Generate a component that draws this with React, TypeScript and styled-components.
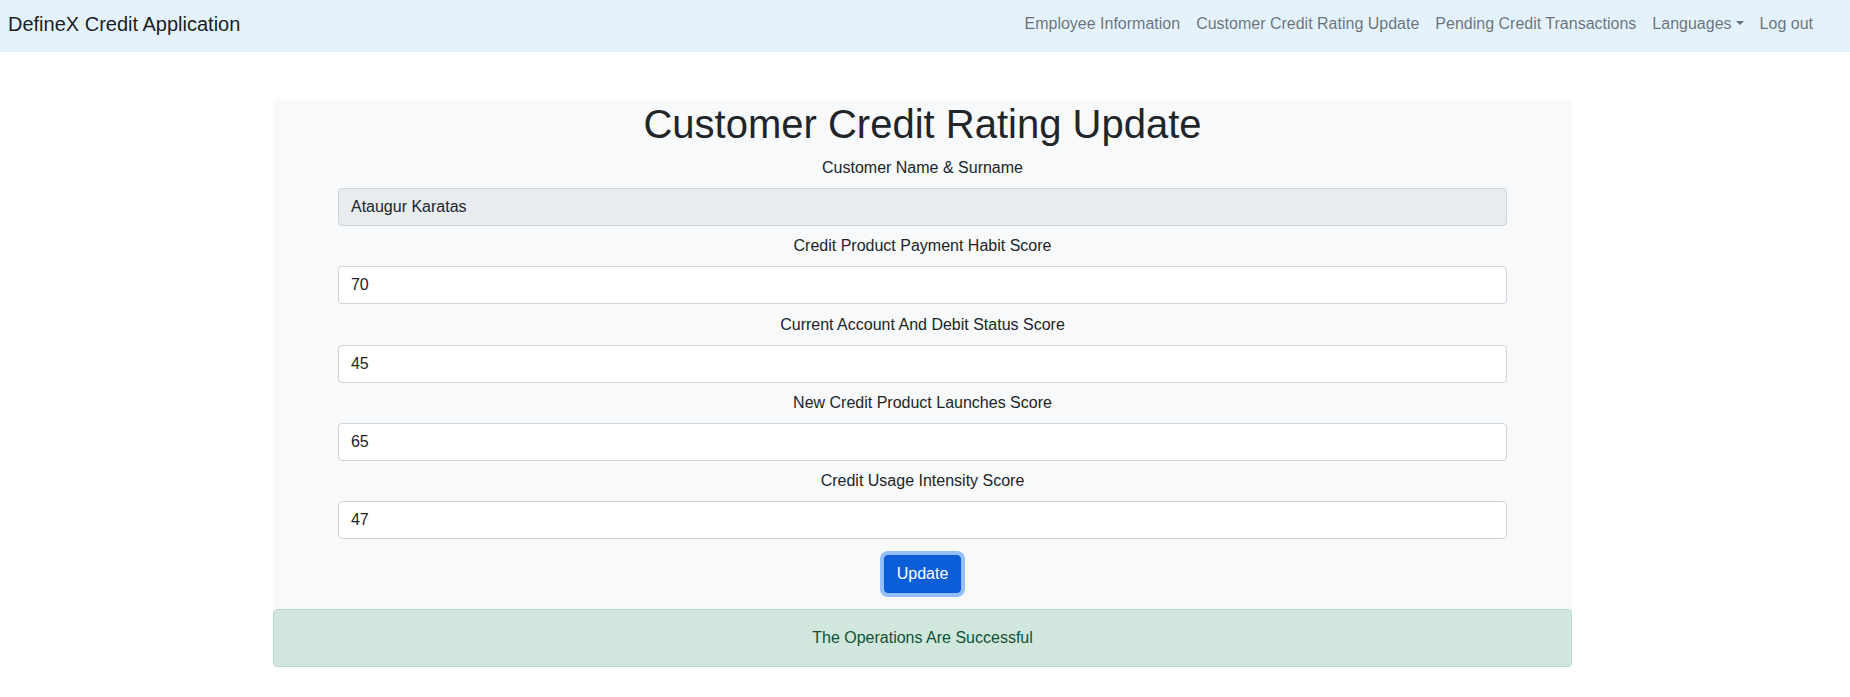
import React from "react";
import styled, { createGlobalStyle, css } from "styled-components";

const GlobalStyle = createGlobalStyle`
  *, *::before, *::after { box-sizing: border-box; }
  body {
    margin: 0;
    font-family: "Liberation Sans", Arial, sans-serif;
    font-size: 16px;
    line-height: 1.5;
    color: #212529;
    background: #ffffff;
  }
`;

const Navbar = styled.nav`
  display: flex;
  align-items: center;
  justify-content: space-between;
  height: 52px;
  padding: 0 29px 4px 8px;
  background: #e3f2fd;
`;

const Brand = styled.a`
  font-size: 20px;
  line-height: 30px;
  color: rgba(0, 0, 0, 0.9);
  text-decoration: none;
  white-space: nowrap;
`;

const NavList = styled.ul`
  display: flex;
  align-items: center;
  list-style: none;
  margin: 0;
  padding: 0;
`;

const NavLink = styled.a<{ $dropdown?: boolean }>`
  display: block;
  padding: 8px;
  font-size: 16px;
  line-height: 24px;
  color: rgba(0, 0, 0, 0.55);
  text-decoration: none;
  white-space: nowrap;
  cursor: pointer;
  ${(p) =>
    p.$dropdown &&
    css`
      &::after {
        content: "";
        display: inline-block;
        margin-left: 0.255em;
        vertical-align: 0.255em;
        border-top: 0.3em solid;
        border-right: 0.3em solid transparent;
        border-left: 0.3em solid transparent;
        border-bottom: 0;
      }
    `}
`;

const Main = styled.main`
  padding-top: 48px;
`;

const Card = styled.section`
  width: 1299px;
  margin-left: calc(50% - 652px);
  display: flex;
  flex-direction: column;
  align-items: center;
  padding-bottom: 16px;
  background: #f8f9fa;
  border-radius: 4px 4px 0 0;
`;

const Title = styled.h1`
  margin: 0 0 8px;
  font-size: 40px;
  font-weight: 500;
  line-height: 1.2;
  color: #212529;
  text-align: center;
`;

const FieldGroup = styled.div`
  width: 90%;
  display: flex;
  flex-direction: column;
  gap: 8px;
  & + & {
    margin-top: 8.25px;
  }
`;

const Label = styled.label`
  display: block;
  text-align: center;
  line-height: 24px;
  color: #212529;
`;

const Input = styled.input`
  display: block;
  width: 100%;
  height: 38px;
  padding: 6px 12px;
  font-family: inherit;
  font-size: 16px;
  line-height: 24px;
  color: #212529;
  background: #ffffff;
  border: 1px solid #ced4da;
  border-radius: 4px;
  outline: none;
  &:disabled {
    background: #e9ecef;
    opacity: 1;
    color: #212529;
  }
`;

const Button = styled.button`
  margin-top: 16px;
  padding: 6px 12px;
  font-family: inherit;
  font-size: 16px;
  line-height: 24px;
  color: #ffffff;
  background: #0b5ed7;
  border: 1px solid #0a58ca;
  border-radius: 4px;
  box-shadow: 0 0 0 4px rgba(49, 132, 253, 0.5);
  cursor: pointer;
`;

const Alert = styled.div`
  width: 1299px;
  margin-left: calc(50% - 652px);
  margin-bottom: 16px;
  padding: 16px;
  line-height: 24px;
  text-align: center;
  color: #0f5132;
  background: #d1e7dd;
  border: 1px solid #badbcc;
  border-radius: 4px;
`;

const links = [
  { label: "Employee Information" },
  { label: "Customer Credit Rating Update" },
  { label: "Pending Credit Transactions" },
  { label: "Languages", dropdown: true },
  { label: "Log out" },
];

const fields = [
  { label: "Customer Name & Surname", value: "Ataugur Karatas", disabled: true },
  { label: "Credit Product Payment Habit Score", value: "70" },
  { label: "Current Account And Debit Status Score", value: "45" },
  { label: "New Credit Product Launches Score", value: "65" },
  { label: "Credit Usage Intensity Score", value: "47" },
];

export default function App() {
  return (
    <>
      <GlobalStyle />
      <Navbar>
        <Brand>DefineX Credit Application</Brand>
        <NavList>
          {links.map((l) => (
            <li key={l.label}>
              <NavLink $dropdown={l.dropdown}>{l.label}</NavLink>
            </li>
          ))}
        </NavList>
      </Navbar>
      <Main>
        <Card>
          <Title>Customer Credit Rating Update</Title>
          {fields.map((f, i) => (
            <FieldGroup key={f.label}>
              <Label htmlFor={`f${i}`}>{f.label}</Label>
              <Input id={`f${i}`} defaultValue={f.value} disabled={f.disabled} />
            </FieldGroup>
          ))}
          <Button type="button">Update</Button>
        </Card>
        <Alert>The Operations Are Successful</Alert>
      </Main>
    </>
  );
}
